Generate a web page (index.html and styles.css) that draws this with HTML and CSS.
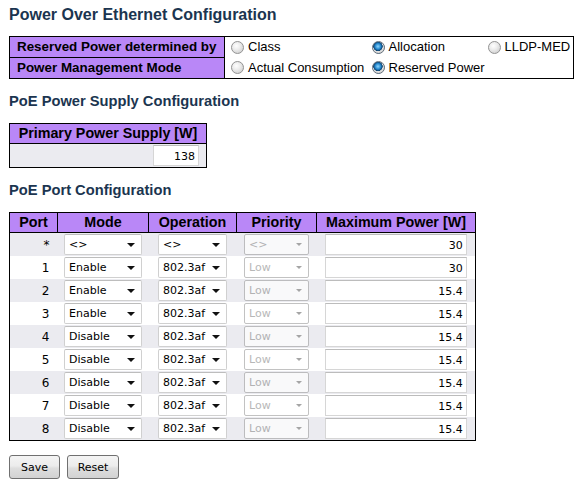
FILE: index.html
```html
<!DOCTYPE html>
<html>
<head>
<meta charset="utf-8">
<link rel="stylesheet" href="styles.css">
</head>
<body>
<h1 class="title">Power Over Ethernet Configuration</h1>
<table class="config gen">
  <colgroup><col class="c-label"><col class="c-r1"><col class="c-r2"><col class="c-r3"></colgroup>
  <tr>
    <th class="hdr left">Reserved Power determined by</th>
    <td><label class="rad"><input type="radio" name="rp"><span>Class</span></label></td>
    <td><label class="rad"><input type="radio" name="rp" checked><span>Allocation</span></label></td>
    <td><label class="rad"><input type="radio" name="rp"><span>LLDP-MED</span></label></td>
  </tr>
  <tr>
    <th class="hdr left">Power Management Mode</th>
    <td><label class="rad"><input type="radio" name="pm"><span>Actual Consumption</span></label></td>
    <td><label class="rad"><input type="radio" name="pm" checked><span>Reserved Power</span></label></td>
    <td></td>
  </tr>
</table>

<h2 class="sub">PoE Power Supply Configuration</h2>
<table class="config supply">
  <tr><th class="hdr">Primary Power Supply [W]</th></tr>
  <tr class="grey"><td class="right"><input class="num small" type="text" value="138"></td></tr>
</table>

<h2 class="sub">PoE Port Configuration</h2>
<table class="config ports">
  <colgroup><col class="c-port"><col class="c-mode"><col class="c-op"><col class="c-pri"><col class="c-max"></colgroup>
  <tr>
    <th class="hdr">Port</th><th class="hdr">Mode</th><th class="hdr">Operation</th><th class="hdr">Priority</th><th class="hdr">Maximum Power [W]</th>
  </tr>
  <tr class="grey">
    <td class="port">*</td>
    <td><span class="sel w-mode"><select><option>&lt;&gt;</option></select></span></td>
    <td><span class="sel w-op"><select><option>&lt;&gt;</option></select></span></td>
    <td><span class="sel w-pri dis"><select disabled><option>&lt;&gt;</option></select></span></td>
    <td><input class="num big" type="text" value="30"></td>
  </tr>
  <tr>
    <td class="port">1</td>
    <td><span class="sel w-mode"><select><option>Enable</option></select></span></td>
    <td><span class="sel w-op"><select><option>802.3af</option></select></span></td>
    <td><span class="sel w-pri dis"><select disabled><option>Low</option></select></span></td>
    <td><input class="num big" type="text" value="30"></td>
  </tr>
  <tr class="grey">
    <td class="port">2</td>
    <td><span class="sel w-mode"><select><option>Enable</option></select></span></td>
    <td><span class="sel w-op"><select><option>802.3af</option></select></span></td>
    <td><span class="sel w-pri dis"><select disabled><option>Low</option></select></span></td>
    <td><input class="num big" type="text" value="15.4"></td>
  </tr>
  <tr>
    <td class="port">3</td>
    <td><span class="sel w-mode"><select><option>Enable</option></select></span></td>
    <td><span class="sel w-op"><select><option>802.3af</option></select></span></td>
    <td><span class="sel w-pri dis"><select disabled><option>Low</option></select></span></td>
    <td><input class="num big" type="text" value="15.4"></td>
  </tr>
  <tr class="grey">
    <td class="port">4</td>
    <td><span class="sel w-mode"><select><option>Disable</option></select></span></td>
    <td><span class="sel w-op"><select><option>802.3af</option></select></span></td>
    <td><span class="sel w-pri dis"><select disabled><option>Low</option></select></span></td>
    <td><input class="num big" type="text" value="15.4"></td>
  </tr>
  <tr>
    <td class="port">5</td>
    <td><span class="sel w-mode"><select><option>Disable</option></select></span></td>
    <td><span class="sel w-op"><select><option>802.3af</option></select></span></td>
    <td><span class="sel w-pri dis"><select disabled><option>Low</option></select></span></td>
    <td><input class="num big" type="text" value="15.4"></td>
  </tr>
  <tr class="grey">
    <td class="port">6</td>
    <td><span class="sel w-mode"><select><option>Disable</option></select></span></td>
    <td><span class="sel w-op"><select><option>802.3af</option></select></span></td>
    <td><span class="sel w-pri dis"><select disabled><option>Low</option></select></span></td>
    <td><input class="num big" type="text" value="15.4"></td>
  </tr>
  <tr>
    <td class="port">7</td>
    <td><span class="sel w-mode"><select><option>Disable</option></select></span></td>
    <td><span class="sel w-op"><select><option>802.3af</option></select></span></td>
    <td><span class="sel w-pri dis"><select disabled><option>Low</option></select></span></td>
    <td><input class="num big" type="text" value="15.4"></td>
  </tr>
  <tr class="grey">
    <td class="port">8</td>
    <td><span class="sel w-mode"><select><option>Disable</option></select></span></td>
    <td><span class="sel w-op"><select><option>802.3af</option></select></span></td>
    <td><span class="sel w-pri dis"><select disabled><option>Low</option></select></span></td>
    <td><input class="num big" type="text" value="15.4"></td>
  </tr>
</table>

<div class="buttons">
  <button class="btn btn-save" type="button">Save</button>
  <button class="btn btn-reset" type="button">Reset</button>
</div>
</body>
</html>
```

FILE: styles.css
```css
html, body {
  margin: 0;
  padding: 0;
  background: #ffffff;
}
body {
  padding: 4px 9px 0 9px;
  font-family: "Liberation Sans", Arial, sans-serif;
  font-size: 13px;
  color: #000;
}
.title {
  margin: 0;
  font-size: 16px;
  font-weight: bold;
  line-height: 21px;
  color: #1b3550;
}
.sub {
  margin: 0;
  font-size: 14.7px;
  font-weight: bold;
  line-height: 18px;
  color: #1b3550;
}
.config {
  border-collapse: collapse;
  border: 1px solid #000;
}
.gen {
  margin-top: 11px;
  margin-bottom: 13px;
  width: 564px;
  table-layout: fixed;
}
.c-label { width: 215px; }
.c-r1 { width: 141px; }
.c-r2 { width: 116px; }
.c-r3 { width: 92px; }

.hdr {
  background: #b987f7;
  border: 1px solid #000;
  font-weight: bold;
  font-size: 14.3px;
  line-height: 19px;
  padding: 0 6px;
  text-align: center;
  white-space: nowrap;
  color: #000;
}
.hdr.left {
  text-align: left;
  padding-left: 7px;
  font-size: 13.4px;
  line-height: 20px;
}
.gen td {
  padding: 0 0 0 6px;
  height: 20px;
  white-space: nowrap;
}
.rad {
  display: flex;
  align-items: center;
  gap: 4px;
  font-size: 13px;
  line-height: 18px;
}
.rad input {
  appearance: none;
  -webkit-appearance: none;
  margin: 0;
  width: 13px;
  height: 13px;
  border-radius: 50%;
  border: 1px solid #949494;
  background: radial-gradient(circle at 40% 35%, #ffffff 0%, #ececec 40%, #c4c4c4 100%);
  box-sizing: border-box;
  flex: none;
}
.rad input:checked {
  border-color: #66727e;
  background:
    radial-gradient(circle at 45% 40%, #8fd8ff 0%, #2386cc 32%, #0c3f6b 50%, rgba(0,0,0,0) 55%),
    radial-gradient(circle at 40% 35%, #ffffff 0%, #ececec 40%, #c4c4c4 100%);
}

.supply {
  margin-top: 13px;
  margin-bottom: 13px;
  width: 198px;
}
.grey td { background: #ebebf0; }
.supply td { padding: 1px 7px 1px 0; height: 21px; }
.right { text-align: right; }

.num {
  font-family: "DejaVu Sans", Tahoma, sans-serif;
  font-size: 11px;
  text-align: right;
  border: 1px solid #d6d6d6;
  border-top-color: #bcbcbc;
  background: #fff;
  height: 21px;
  box-sizing: border-box;
  padding: 2px 3px 0 2px;
  margin: 0;
  color: #000;
  vertical-align: middle;
}
.small { width: 46px; }
.big { width: 142px; display: block; margin: 0 auto; }

.ports {
  margin-top: 13px;
  width: 466px;
  table-layout: fixed;
}
.c-port { width: 48px; }
.c-mode { width: 91px; }
.c-op { width: 88px; }
.c-pri { width: 80px; }
.c-max { width: 159px; }
.ports .hdr { line-height: 19px; padding: 0; }
.ports td {
  height: 23px;
  padding: 0;
  text-align: center;
}
.ports td.port {
  text-align: right;
  padding-right: 8px;
  font-family: "DejaVu Sans", Tahoma, sans-serif;
  font-size: 12px;
}

.sel {
  display: inline-block;
  position: relative;
  vertical-align: middle;
}
.sel select {
  appearance: none;
  -webkit-appearance: none;
  width: 100%;
  height: 21px;
  margin: 0;
  border: 1px solid #d0d0d0;
  border-top-color: #bdbdbd;
  border-radius: 2px;
  background: #fff;
  font-family: "DejaVu Sans", Tahoma, sans-serif;
  font-size: 11px;
  color: #000;
  padding: 0 0 0 4px;
  display: block;
}
.sel::after {
  content: "";
  position: absolute;
  right: 7px;
  top: 9px;
  border-left: 4px solid transparent;
  border-right: 4px solid transparent;
  border-top: 4px solid #111;
  pointer-events: none;
}
.sel.dis select {
  color: #9a9a9a;
  border-color: #a9a9a9;
  background: #fff;
}
.sel.dis::after {
  border-left-width: 3.5px;
  border-right-width: 3.5px;
  border-top: 3.5px solid #a5a5a5;
}
.w-mode { width: 78px; }
.w-op { width: 69px; }
.w-pri { width: 65px; }

.buttons {
  margin-top: 14px;
  display: flex;
  gap: 7px;
}
.btn {
  font-family: "DejaVu Sans", Tahoma, sans-serif;
  font-size: 11px;
  height: 24px;
  border: 1px solid #707070;
  border-radius: 3px;
  background: linear-gradient(#f4f4f4 0%, #ececec 45%, #dedede 55%, #d2d2d2 100%);
  padding: 0;
  margin: 0;
  color: #000;
}
.btn-save { width: 51px; }
.btn-reset { width: 52px; }
```
